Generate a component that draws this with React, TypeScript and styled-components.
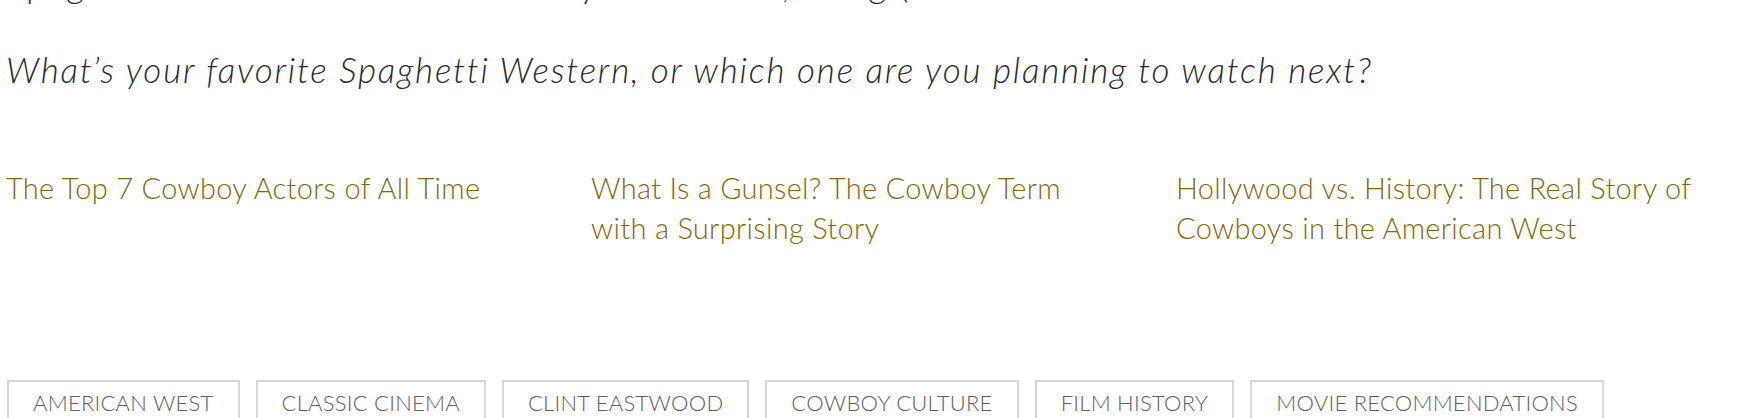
import styled, { createGlobalStyle } from 'styled-components';

const GlobalStyle = createGlobalStyle`
  html, body {
    margin: 0;
    padding: 0;
    background: #ffffff;
    overflow: hidden;
  }
  body {
    font-family: 'Lato', 'Liberation Sans', sans-serif;
    color: #333333;
  }
`;

const Article = styled.article`
  width: 1746px;
  height: 418px;
  box-sizing: border-box;
  padding: 0 6px;
  overflow: hidden;
`;

const Paragraph = styled.p<{ italic?: boolean }>`
  margin: 0;
  font-size: 35px;
  line-height: 48px;
  font-weight: 300;
  letter-spacing: 1.8px;
  font-style: ${(p) => (p.italic ? 'italic' : 'normal')};
  color: #2b2b2b;
  white-space: nowrap;
`;

const CutLine = styled(Paragraph)`
  margin-top: -40px;
`;

const Question = styled(Paragraph)`
  margin-top: 37px;
`;

const RelatedGrid = styled.div`
  display: grid;
  grid-template-columns: repeat(3, 525px);
  column-gap: 60px;
  margin-top: 75px;
`;

const RelatedLink = styled.a`
  display: block;
  font-size: 29px;
  line-height: 40px;
  font-weight: 300;
  letter-spacing: 0.3px;
  color: #876808;
  text-decoration: none;
`;

const TagList = styled.ul`
  display: flex;
  gap: 16px;
  list-style: none;
  margin: 132px 0 0;
  padding: 0 0 0 1px;
`;

const Tag = styled.li`
  border: 2px solid #d6d6d6;
  padding: 6px 24px;
  font-size: 22px;
  line-height: 30px;
  font-weight: 300;
  letter-spacing: 0.25px;
  color: #606060;
  text-transform: uppercase;
  white-space: nowrap;
`;

const related = [
  'The Top 7 Cowboy Actors of All Time',
  'What Is a Gunsel? The Cowboy Term with a Surprising Story',
  'Hollywood vs. History: The Real Story of Cowboys in the American West',
];

const tags = [
  'American West',
  'Classic Cinema',
  'Clint Eastwood',
  'Cowboy Culture',
  'Film History',
  'Movie Recommendations',
];

export default function App() {
  return (
    <>
      <GlobalStyle />
      <Article>
        <CutLine>Spaghetti Western marathon with your friends, bring (</CutLine>
        <Question italic>
          What’s your favorite Spaghetti Western, or which one are you planning to watch next?
        </Question>
        <RelatedGrid>
          {related.map((title) => (
            <RelatedLink key={title} href="#">
              {title}
            </RelatedLink>
          ))}
        </RelatedGrid>
        <TagList>
          {tags.map((tag) => (
            <Tag key={tag}>{tag}</Tag>
          ))}
        </TagList>
      </Article>
    </>
  );
}
